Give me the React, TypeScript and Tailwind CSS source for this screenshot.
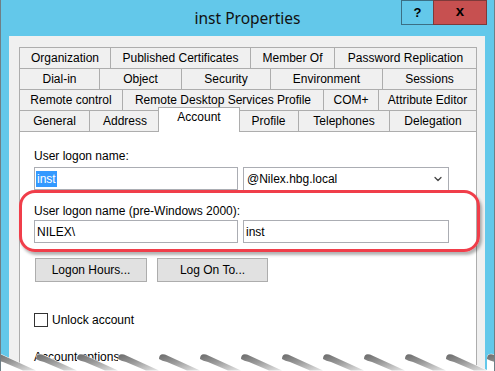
import { ChevronDown } from "lucide-react";

const rows: { label: string; w: number; active?: boolean }[][] = [
  [
    { label: "Organization", w: 91 },
    { label: "Published Certificates", w: 140 },
    { label: "Member Of", w: 84 },
    { label: "Password Replication", w: 143 },
  ],
  [
    { label: "Dial-in", w: 80 },
    { label: "Object", w: 82 },
    { label: "Security", w: 89 },
    { label: "Environment", w: 112 },
    { label: "Sessions", w: 95 },
  ],
  [
    { label: "Remote control", w: 103 },
    { label: "Remote Desktop Services Profile", w: 201 },
    { label: "COM+", w: 55 },
    { label: "Attribute Editor", w: 99 },
  ],
  [
    { label: "General", w: 70 },
    { label: "Address", w: 71 },
    { label: "Account", w: 78, active: true },
    { label: "Profile", w: 60 },
    { label: "Telephones", w: 91 },
    { label: "Delegation", w: 88 },
  ],
];

function TabRow({ tabs }: { tabs: { label: string; w: number; active?: boolean }[] }) {
  return (
    <div className="flex h-[21px] items-start">
      {tabs.map((t, i) =>
        t.active ? (
          <div
            key={t.label}
            style={{ width: t.w + 4 }}
            className="relative z-10 -mx-[2px] -mt-[3px] flex h-[25px] items-start justify-center border border-b-0 border-[#adadad] bg-white pt-[2px] leading-[15px]"
          >
            {t.label}
          </div>
        ) : (
          <div
            key={t.label}
            style={{ width: t.w }}
            className={`flex h-[21px] items-center justify-center border-l border-t border-[#adadad] bg-[#f0f0f0] leading-[19px] ${
              i === tabs.length - 1 ? "border-r" : ""
            }`}
          >
            {t.label}
          </div>
        )
      )}
    </div>
  );
}

function Button({ label, w }: { label: string; w: number }) {
  return (
    <div
      style={{ width: w }}
      className="flex h-[24px] items-center justify-center border border-[#adadad] bg-[#e1e1e1]"
    >
      {label}
    </div>
  );
}

function TornEdge() {
  const teeth = Array.from({ length: 14 }, (_, k) => -6 + 41 * k);
  let d = "M0 25 L0 9";
  teeth.forEach((px) => {
    d += ` L${px} 11 Q${px + 1} 7 ${px + 6} 8 L${px + 41} 24 L${px + 41} 11`;
  });
  d += " L495 25 Z";
  return (
    <svg className="absolute bottom-0 left-0" width="495" height="25" viewBox="0 0 495 25">
      <defs>
        <linearGradient id="tooth" x1="0" y1="0" x2="1" y2="1">
          <stop offset="0" stopColor="#6a6a6a" />
          <stop offset="0.45" stopColor="#9a9a9a" />
          <stop offset="1" stopColor="#e6e6e6" />
        </linearGradient>
      </defs>
      <path d={d} fill="#ffffff" />
      {teeth.map((px) => (
        <path
          key={px}
          d={`M${px} 13 Q${px} 7 ${px + 6} 8.5 L${px + 41} 24.5 L${px + 28} 24.5 L${px + 8} 16 Q${px + 3} 15 ${px} 13 Z`}
          fill="url(#tooth)"
        />
      ))}
    </svg>
  );
}

export default function App() {
  return (
    <div className="relative h-[371px] w-[495px] overflow-hidden border-x border-[#6f7f86] bg-[#63c8ea] font-['Liberation_Sans',Arial,sans-serif] text-[12px] text-black">
      {/* title bar */}
      <div className="grid h-[36px] grid-cols-[1fr_auto_1fr]">
        <div />
        <div className="self-center pb-[1px] font-['Noto_Sans',sans-serif] text-[15.5px] leading-[20px] text-[#111]">
          inst Properties
        </div>
        <div className="flex items-start justify-end pr-[7px]">
          <div className="flex h-[25px] w-[33px] items-center justify-center border border-[#3b6f85] bg-[#63c8ea] text-[13px] font-bold">
            ?
          </div>
          <div className="-ml-px flex h-[25px] w-[54px] items-center justify-center border border-[#7d3a3a] bg-[#c75050] pb-[2px] text-[15px] font-bold">
            x
          </div>
        </div>
      </div>

      {/* client area */}
      <div className="ml-[8px] flex h-[335px] w-[476px] flex-col bg-[#f0f0f0] pl-[10px] pr-[8px] pt-[11px]">
        {rows.map((r, i) => (
          <TabRow key={i} tabs={r} />
        ))}
        <div className="flex-1 border border-b-0 border-[#adadad] bg-white pl-[14px]">
          <div className="mt-[17px] leading-[14px]">User logon name:</div>
          <div className="mt-[4px] flex items-start">
            <div className="flex h-[23px] w-[204px] items-center border border-[#abadb3] pl-[1px]">
              <span className="bg-[#3399ff] px-[1px] leading-[16px] text-white">inst</span>
            </div>
            <div className="ml-[5px] flex h-[24px] w-[206px] items-center justify-between border border-[#abadb3] pl-[3px] pr-[4px]">
              <span>@Nilex.hbg.local</span>
              <ChevronDown size={12} strokeWidth={2.5} className="text-[#444]" />
            </div>
          </div>
          <div className="mt-[13px] leading-[14px]">User logon name (pre-Windows 2000):</div>
          <div className="mt-[2px] flex">
            <div className="flex h-[23px] w-[204px] items-center border border-[#abadb3] pl-[2px]">NILEX\</div>
            <div className="ml-[5px] flex h-[23px] w-[206px] items-center border border-[#abadb3] pl-[2px]">inst</div>
          </div>
          <div className="mt-[15px] flex gap-[10px] pl-[1px]">
            <Button label="Logon Hours..." w={112} />
            <Button label="Log On To..." w={111} />
          </div>
          <div className="mt-[31px] flex items-center gap-[4px]">
            <div className="h-[14px] w-[14px] border border-[#333] bg-white" />
            <span className="leading-[14px]">Unlock account</span>
          </div>
          <div className="mt-[23px] leading-[14px]">Account options:</div>
        </div>
      </div>

      {/* annotation */}
      <div className="absolute left-[18px] top-[190px] h-[62px] w-[461px] rounded-[16px] border-[3px] border-[#f03e4a] shadow-[2px_3px_3px_rgba(0,0,0,0.3)]" />

      <TornEdge />
    </div>
  );
}
